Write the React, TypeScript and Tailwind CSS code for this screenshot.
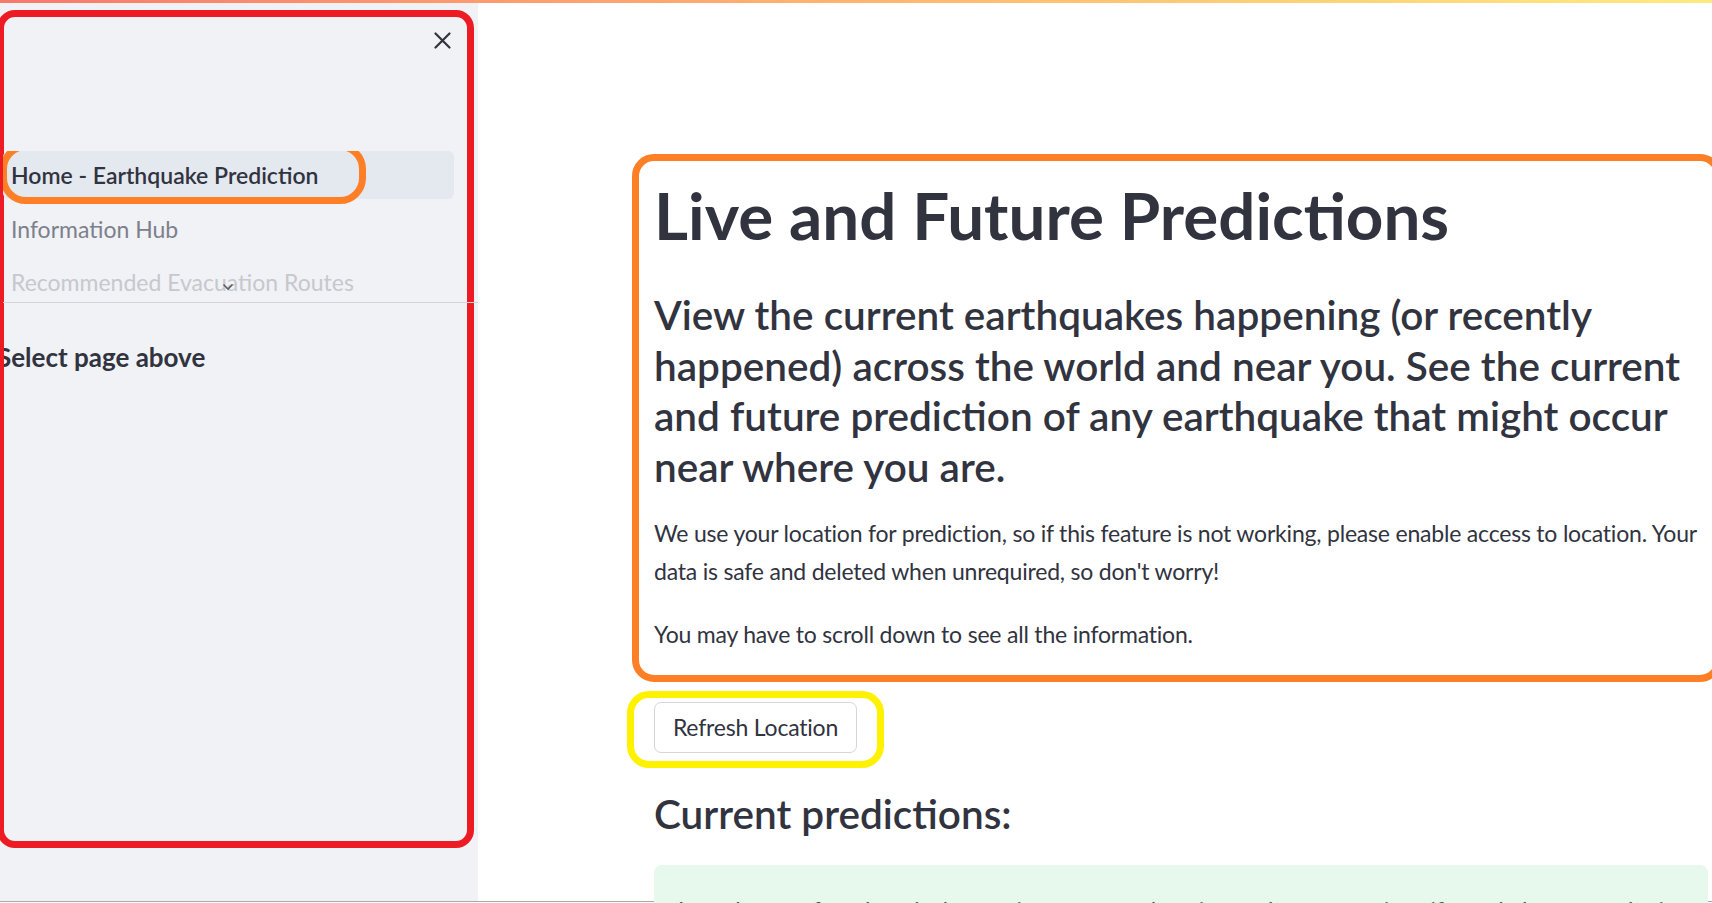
const font = "font-['Lato','Noto_Sans',sans-serif]";

function CloseIcon() {
  return (
    <svg width="17" height="17" viewBox="0 0 17 17" fill="none">
      <path d="M1.5 1.5L15.5 15.5M15.5 1.5L1.5 15.5" stroke="#31333f" strokeWidth="2.2" strokeLinecap="round" />
    </svg>
  );
}

function Sidebar() {
  return (
    <aside className="relative w-[478px] shrink-0 bg-[#f0f2f6]">
      {/* annotation box drawn over the sidebar */}
      <div className="pointer-events-none absolute left-[-3px] top-[7px] h-[838px] w-[477px] rounded-[18px] border-[7px] border-[#ed1c24]" />

      <div className="flex h-[55px] justify-end pr-[27px] pt-[29px]">
        <CloseIcon />
      </div>

      <nav className="relative ml-[3px] mt-[93px] h-[152px] overflow-hidden border-b border-[#d3d5db] pr-[24px] text-[23px]">
        <div className="relative flex h-[48px] items-center rounded-md bg-[#e4e8ef] pl-[8px] font-semibold text-[#31333f]">
          Home - Earthquake Prediction
          <div className="pointer-events-none absolute left-[-3px] top-[-8px] h-[61px] w-[366px] rounded-[26px] border-[7px] border-[#ff7f27]" />
        </div>
        <div className="mt-[6px] flex h-[48px] items-center pl-[8px] text-[#7d808c]">Information Hub</div>
        <div className="mt-[5px] flex h-[48px] items-center pl-[8px] text-[#c6c8ce]">
          Recommended Evacuation Routes
        </div>
        <svg className="absolute left-[219px] top-[132px]" width="12" height="8" viewBox="0 0 12 8" fill="none">
          <path d="M1.5 1.5L6 6L10.5 1.5" stroke="#5a5c66" strokeWidth="1.6" />
        </svg>
      </nav>

      <div className="ml-[-3px] mt-[36px] text-[26px] font-bold leading-[36px] text-[#31333f]">Select page above</div>
    </aside>
  );
}

function Main() {
  return (
    <main className="min-w-0 flex-1 bg-white pl-[176px] pt-[151px] text-[#31333f]">
      <div className="w-[1054px]">
        <div className="relative pb-[29px] pt-[21px]">
          <div className="pointer-events-none absolute bottom-0 left-[-22px] right-[-14px] top-0 rounded-[22px] border-[7px] border-[#ff7f27]" />
          <h1 className="text-[65.5px] font-bold leading-[79px]">Live and Future Predictions</h1>
          <h3 className="mt-[36px] text-[40.5px] font-semibold leading-[50.5px]">
            View the current earthquakes happening (or recently happened) across the world and near you. See the
            current and future prediction of any earthquake that might occur near where you are.
          </h3>
          <p className="mt-[22px] text-[23px] leading-[38px] tracking-[-0.2px]">
            We use your location for prediction, so if this feature is not working, please enable access to location.
            Your data is safe and deleted when unrequired, so don't worry!
          </p>
          <p className="mt-[25px] text-[23px] leading-[38px] tracking-[-0.2px]">
            You may have to scroll down to see all the information.
          </p>
        </div>

        <div className="relative mt-[20px] w-fit">
          <div className="pointer-events-none absolute bottom-[-15px] left-[-27px] right-[-27px] top-[-11px] rounded-[22px] border-[7px] border-[#fff200]" />
          <button className="flex h-[51px] w-[203px] items-center justify-center rounded-[7px] border border-[#d6d6d9] bg-white text-[23px] tracking-[-0.2px]">
            Refresh Location
          </button>
        </div>

        <h3 className="mt-[36px] text-[40.5px] font-semibold leading-[50.5px]">Current predictions:</h3>

        <div className="mt-[25px] h-[200px] rounded-[8px] bg-[#e7f8ec] px-[24px] pt-[26px] text-[23px] leading-[38px] tracking-[-0.2px] text-[#177233]">
          Low chance of earthquake happening near your location at the current time, if you do happen to be in an
          earthquake zone, stay alert.
        </div>
      </div>
    </main>
  );
}

export default function App() {
  return (
    <div className={`${font} relative h-[903px] w-[1712px] overflow-hidden bg-white`}>
      <div className="h-[3px] w-full bg-linear-to-r from-[#f7796a] via-[#ffb570] to-[#ffea80]" />
      <div className="flex h-[899px] border-b border-[#a9a9a9]">
        <Sidebar />
        <Main />
      </div>
    </div>
  );
}
